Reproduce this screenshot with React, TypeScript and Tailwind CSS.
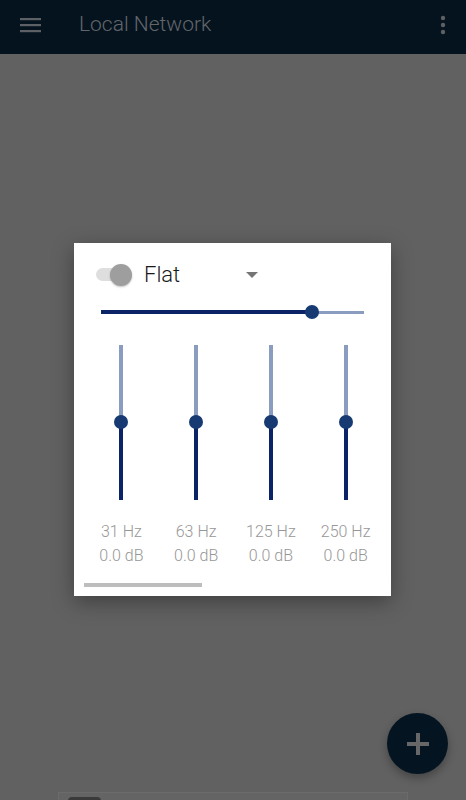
import React from "react";

const BANDS = [
  { hz: "31 Hz", db: "0.0 dB" },
  { hz: "63 Hz", db: "0.0 dB" },
  { hz: "125 Hz", db: "0.0 dB" },
  { hz: "250 Hz", db: "0.0 dB" },
];

function VerticalBand({ hz, db }: { hz: string; db: string }) {
  return (
    <div className="flex w-[75px] flex-col items-center">
      <div className="relative h-[155px] w-[4px]">
        <div className="h-[77px] w-full bg-[#8a9cbf]" />
        <div className="h-[78px] w-full bg-[#0b2468]" />
        <div className="absolute top-[70px] left-1/2 size-[14px] -translate-x-1/2 rounded-full bg-[#173a73]" />
      </div>
      <div className="mt-[20px] text-center text-[16px] leading-[24px] font-light text-[#979797]">
        <div>{hz}</div>
        <div>{db}</div>
      </div>
    </div>
  );
}

export default function App() {
  return (
    <div className="relative flex h-[800px] w-[466px] flex-col overflow-hidden bg-[#616161] font-['Roboto',sans-serif]">
      <header className="flex h-[54px] shrink-0 items-center bg-[#05131f] pr-[20px] pb-[4px] pl-[20px]">
        <svg width="22" height="16" viewBox="0 0 22 16" className="shrink-0">
          <rect x="0" y="1" width="21" height="2.2" fill="#5d6166" />
          <rect x="0" y="7" width="21" height="2.2" fill="#5d6166" />
          <rect x="0" y="13" width="21" height="2.2" fill="#5d6166" />
        </svg>
        <span className="ml-[37px] text-[21px] font-light text-[#62666b]">Local Network</span>
        <svg width="6" height="20" viewBox="0 0 6 20" className="ml-auto">
          <circle cx="3" cy="3" r="2.2" fill="#5d6166" />
          <circle cx="3" cy="10" r="2.2" fill="#5d6166" />
          <circle cx="3" cy="17" r="2.2" fill="#5d6166" />
        </svg>
      </header>

      <div className="flex flex-1 items-start justify-center pt-[189px] pr-[1px]">
        <div className="w-[317px] bg-white pt-[20px] pb-[9px] shadow-[0_6px_20px_rgba(0,0,0,0.35)]">
          <div className="flex h-[23px] items-center pl-[22px]">
            <div className="relative h-[13px] w-[35px]">
              <div className="h-full w-full rounded-full bg-[#dedede]" />
              <div className="absolute top-1/2 right-[-1px] size-[22px] -translate-y-1/2 rounded-full bg-[#9e9e9e] shadow-[0_1px_2px_rgba(0,0,0,0.25)]" />
            </div>
            <span className="ml-[13px] text-[22px] leading-none font-light text-[#1a1a1a]">Flat</span>
            <svg width="12" height="6" viewBox="0 0 12 6" className="ml-[66px]">
              <path d="M0 0 L12 0 L6 6 Z" fill="#757575" />
            </svg>
          </div>

          <div className="relative mx-[27px] mt-[19px] h-[14px]">
            <div className="absolute top-1/2 left-0 flex h-[4px] w-full -translate-y-1/2">
              <div className="h-full w-[211px] bg-[#0b2468]" />
              <div className="h-[3px] flex-1 self-center bg-[#8a9cbf]" />
            </div>
            <div className="absolute top-0 left-[204px] size-[14px] rounded-full bg-[#173a73]" />
          </div>

          <div className="mt-[26px] flex pr-[8px] pl-[10px]">
            {BANDS.map((b) => (
              <VerticalBand key={b.hz} hz={b.hz} db={b.db} />
            ))}
          </div>

          <div className="mt-[15px] ml-[10px] h-[4px] w-[118px] bg-[#bdbdbd]" />
        </div>
      </div>

      <button
        type="button"
        className="absolute top-[713px] left-[387px] flex size-[61px] items-center justify-center rounded-full bg-[#041521] shadow-[0_4px_8px_rgba(0,0,0,0.3)]"
      >
        <svg width="22" height="22" viewBox="0 0 22 22">
          <rect x="9" y="0" width="4" height="22" fill="#676767" />
          <rect x="0" y="9" width="22" height="4" fill="#676767" />
        </svg>
      </button>

      <div className="absolute top-[792px] left-[58px] h-[20px] w-[350px] border border-[#6b6b6b] bg-[#646464]">
        <div className="mt-[4px] ml-[9px] h-[10px] w-[33px] rounded-sm bg-[#3a3a3a]" />
      </div>
    </div>
  );
}
